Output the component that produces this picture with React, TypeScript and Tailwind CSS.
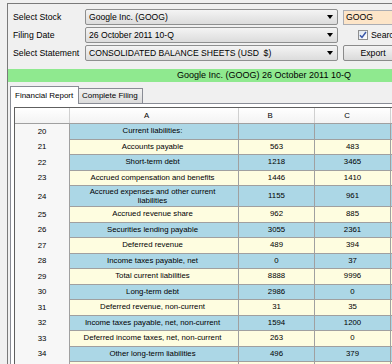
import React from "react";

type Row = { n: number | null; label: React.ReactNode; b: string; c: string; tall?: boolean };

const ROWS: Row[] = [
  { n: 20, label: "Current liabilities:", b: "", c: "" },
  { n: 21, label: "Accounts payable", b: "563", c: "483" },
  { n: 22, label: "Short-term debt", b: "1218", c: "3465" },
  { n: 23, label: "Accrued compensation and benefits", b: "1446", c: "1410" },
  {
    n: 24,
    label: (
      <>
        Accrued expenses and other current
        <br />
        liabilities
      </>
    ),
    b: "1155",
    c: "961",
    tall: true,
  },
  { n: 25, label: "Accrued revenue share", b: "962", c: "885" },
  { n: 26, label: "Securities lending payable", b: "3055", c: "2361" },
  { n: 27, label: "Deferred revenue", b: "489", c: "394" },
  { n: 28, label: "Income taxes payable, net", b: "0", c: "37" },
  { n: 29, label: "Total current liabilities", b: "8888", c: "9996" },
  { n: 30, label: "Long-term debt", b: "2986", c: "0" },
  { n: 31, label: "Deferred revenue, non-current", b: "31", c: "35" },
  { n: 32, label: "Income taxes payable, net, non-current", b: "1594", c: "1200" },
  { n: 33, label: "Deferred income taxes, net, non-current", b: "263", c: "0" },
  { n: 34, label: "Other long-term liabilities", b: "496", c: "379" },
  { n: null, label: "", b: "", c: "" },
];

function Combo({ value }: { value: string }) {
  return (
    <div className="flex h-[16px] w-[253px] items-center justify-between rounded-[2px] border border-[#8e8f8f] bg-gradient-to-b from-[#f4f4f4] to-[#dcdcdc] pl-[3px] pr-[4px]">
      <span className="whitespace-pre text-[8.6px] leading-none">{value}</span>
      <svg width="6" height="4" viewBox="0 0 6 4">
        <path d="M0 0h6L3 4z" fill="#000" />
      </svg>
    </div>
  );
}

function FormRow({ label, children }: { label: string; children: React.ReactNode }) {
  return (
    <div className="flex h-[16px] items-center">
      <span className="w-[72px] text-[8.7px] leading-none">{label}</span>
      {children}
    </div>
  );
}

export default function App() {
  return (
    <div className="h-[364px] w-[392px] overflow-hidden bg-[#f0f0f0] pl-[7px] pt-[3px] font-['Liberation_Sans',Arial,sans-serif] text-black">
      <div className="h-[420px] w-[560px] border-l border-t border-[#7a7a7a]">
        <div className="flex flex-col gap-[2px] pl-[5px] pt-[5px]">
          <FormRow label="Select Stock">
            <Combo value="Google Inc. (GOOG)" />
            <div className="ml-[5px] flex h-[15px] w-[70px] items-center border border-[#abadb3] bg-[#fde5c8] pl-[2px] text-[8.7px] leading-none">
              GOOG
            </div>
          </FormRow>
          <FormRow label="Filing Date">
            <Combo value="26 October 2011 10-Q" />
            <div className="ml-[20px] flex items-center gap-[3px]">
              <div className="flex h-[10px] w-[10px] items-center justify-center border border-[#8f8f8f] bg-gradient-to-br from-[#dfe6ee] to-[#ffffff]">
                <svg width="8" height="8" viewBox="0 0 8 8">
                  <path d="M1 4.2l2 2.2L7 1" fill="none" stroke="#3a57a8" strokeWidth="1.5" />
                </svg>
              </div>
              <span className="text-[8.7px] leading-none">Search</span>
            </div>
          </FormRow>
          <FormRow label="Select Statement">
            <Combo value="CONSOLIDATED BALANCE SHEETS (USD  $)" />
            <div className="ml-[5px] flex h-[16px] w-[60px] items-center justify-center rounded-[2px] border border-[#8a8a8a] bg-gradient-to-b from-[#f4f4f4] to-[#dadada] text-[8.7px] leading-none">
              Export
            </div>
          </FormRow>
        </div>

        <div className="mt-[8px] flex h-[13px] items-center bg-[#8fe98f] pl-[169px] text-[9px] leading-none">
          Google Inc. (GOOG) 26 October 2011 10-Q
        </div>

        <div className="ml-[2px] mt-[4px]">
          <div className="flex h-[17px] items-start">
            <div className="relative z-10 flex h-[18px] w-[69px] items-center border-l border-r border-t border-[#898c95] bg-white pl-[4px] text-[8px] leading-none">
              Financial Report
            </div>
            <div className="mt-[2px] flex h-[15px] w-[64px] items-center border-r border-t border-[#898c95] bg-gradient-to-b from-[#f2f2f2] to-[#dcdcdc] pl-[3px] text-[8px] leading-none">
              Complete Filing
            </div>
          </div>
          <div className="h-[300px] border-l border-t border-[#898c95] bg-white pl-[3px] pt-[3px]">
            <div className="w-[500px] border-l border-t border-[#5f5f5f] text-[7.8px] leading-none">
              <div className="flex h-[16px] border-b border-[#a0a0a0] bg-gradient-to-b from-[#ffffff] to-[#f3f3f3]">
                <div className="w-[55px] border-r border-[#d0d0d0]" />
                <div className="flex w-[169px] items-center justify-center border-r border-[#d0d0d0] pr-[15px]">A</div>
                <div className="flex w-[76px] items-center justify-center border-r border-[#d0d0d0] pr-[13px]">B</div>
                <div className="flex w-[76px] items-center justify-center border-r border-[#d0d0d0] pr-[11px]">C</div>
                <div className="flex-1" />
              </div>
              {ROWS.map((r, i) => {
                const bg = i % 2 === 0 ? "bg-[#acd7e6]" : "bg-[#fefde0]";
                return (
                  <div key={i} className={`flex ${r.tall ? "h-[21px]" : "h-[15.5px]"}`}>
                    <div className="flex w-[55px] items-center justify-center border-r border-[#a0a0a0] bg-[#f7f7f7]">
                      {r.n}
                    </div>
                    <div className={`flex w-[169px] items-center justify-center border-b border-r border-[#a0a0a0] pr-[3px] text-center ${bg}`}>
                      <span className={r.tall ? "leading-[9.5px]" : ""}>{r.label}</span>
                    </div>
                    <div className={`flex w-[76px] items-center justify-center border-b border-r border-[#a0a0a0] ${bg}`}>
                      {r.b}
                    </div>
                    <div className={`flex w-[76px] items-center justify-center border-b border-r border-[#a0a0a0] ${bg}`}>
                      {r.c}
                    </div>
                    <div className={`flex-1 border-b border-[#a0a0a0] ${bg}`} />
                  </div>
                );
              })}
            </div>
          </div>
        </div>
      </div>
    </div>
  );
}
